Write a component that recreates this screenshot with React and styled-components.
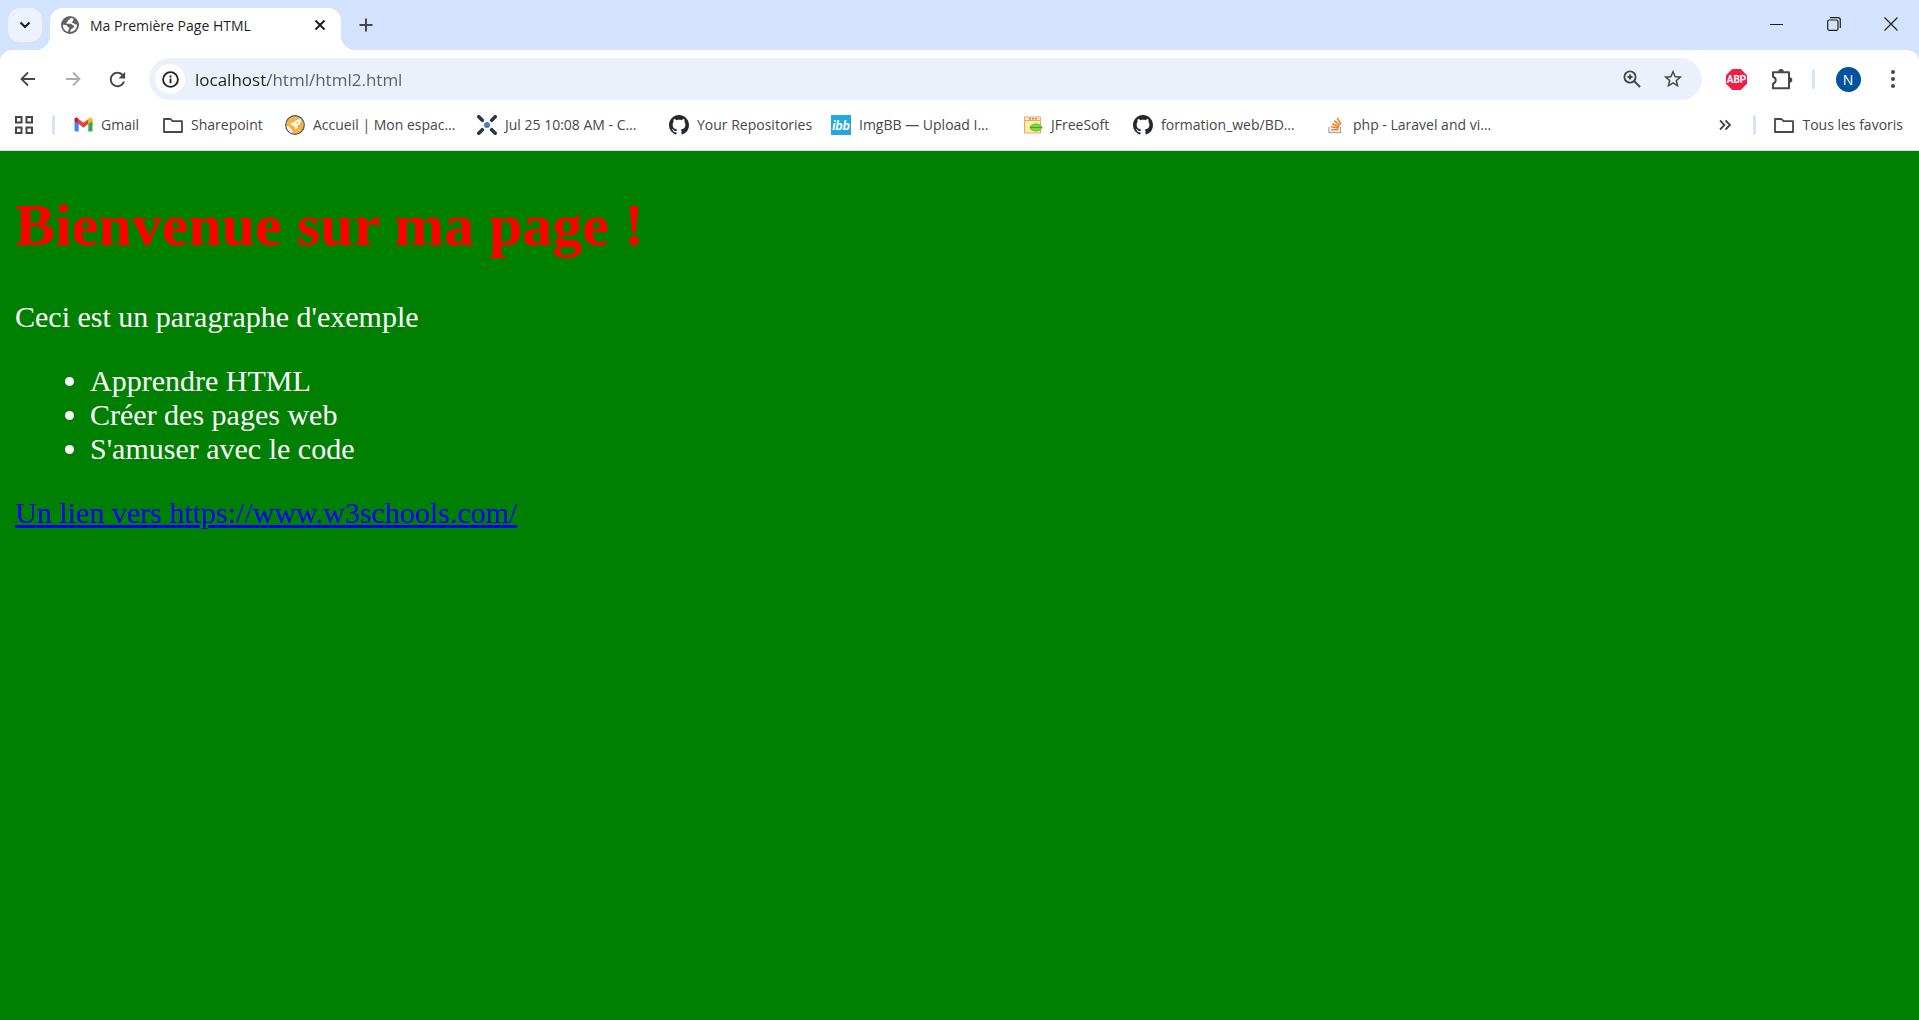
import React, { useState } from "react";
import styled, { createGlobalStyle } from "styled-components";

const GlobalStyle = createGlobalStyle`
  * { box-sizing: border-box; }
  body { margin: 0; background: #008000; }
  button, input { font: inherit; color: inherit; }
`;

const Window = styled.div`
  min-height: 100vh;
  display: flex;
  flex-direction: column;
  background: #d3e3fd;
  font-family: "Open Sans", "Noto Sans", sans-serif;
  font-size: 14px;
  color: #474747;
`;

const TabStrip = styled.header`
  display: flex;
  align-items: flex-end;
  height: 50px;
  padding-left: 8px;
`;

const IconButton = styled.button`
  display: inline-flex;
  align-items: center;
  justify-content: center;
  flex: none;
  width: ${(p) => p.$width || 34}px;
  height: 34px;
  padding: 0;
  border: 0;
  border-radius: 12px;
  background: ${(p) => p.$fill || "transparent"};
  color: ${(p) => p.$color || "#474747"};
`;

const TabSearch = styled(IconButton)`
  margin: 0 8px 8px 0;
`;

const Tab = styled.div`
  position: relative;
  display: flex;
  align-items: center;
  width: 291px;
  height: 42px;
  padding: 0 4px 8px 11px;
  border-radius: 13px 13px 0 0;
  background: #fff;
  color: #1f1f1f;

  &::before,
  &::after {
    content: "";
    position: absolute;
    bottom: 0;
    width: 14px;
    height: 14px;
  }
  &::before {
    left: -14px;
    background: radial-gradient(circle at 0 0, transparent 14px, #fff 14px);
  }
  &::after {
    right: -14px;
    background: radial-gradient(circle at 100% 0, transparent 14px, #fff 14px);
  }
`;

const TabTitle = styled.span`
  flex: 1;
  margin-left: 11px;
  white-space: nowrap;
`;

const NewTab = styled(IconButton)`
  margin: 0 0 8px 8px;
`;

const WindowControls = styled.div`
  display: flex;
  align-self: flex-start;
  margin-left: auto;
`;

const WindowButton = styled(IconButton)`
  width: 57px;
  height: 48px;
  border-radius: 0;
  color: #1f1f1f;
`;

const Toolbar = styled.div`
  display: flex;
  align-items: center;
  height: 58px;
  padding: 0 9px 0 5px;
  border-radius: 12px 12px 0 0;
  background: #fff;
`;

const NavButtons = styled.nav`
  display: flex;
  margin-right: 9px;
`;

const AddressBar = styled.form`
  display: flex;
  align-items: center;
  flex: 1;
  height: 42px;
  padding: 0 9px 0 6px;
  border-radius: 21px;
  background: #ecf0fa;
`;

const SiteInfo = styled(IconButton)`
  width: 30px;
  height: 30px;
  border-radius: 50%;
`;

const Address = styled.input`
  flex: 1;
  min-width: 0;
  height: 30px;
  padding: 0 0 0 10px;
  border: 0;
  outline: 0;
  font-size: 17px;
  color: transparent;
  caret-color: #1f1f1f;
  background: linear-gradient(90deg, #1f1f1f 83px, #5b5d60 83px);
  background-clip: text;
  -webkit-background-clip: text;
`;

const Divider = styled.span`
  flex: none;
  width: 3px;
  height: 20px;
  border-radius: 2px;
  background: #d3e3fd;
`;

const Actions = styled.div`
  display: flex;
  align-items: center;
  margin-left: 12px;
`;

const ToolbarDivider = styled(Divider)`
  margin: 0 5px 0 8px;
`;

const Avatar = styled.span`
  display: flex;
  align-items: center;
  justify-content: center;
  width: 25px;
  height: 25px;
  border-radius: 50%;
  background: #00539c;
  color: #fff;
  font-size: 14px;
`;

const BookmarksBar = styled.nav`
  display: flex;
  align-items: center;
  height: 43px;
  padding: 0 16px 9px 7px;
  background: #fff;
  border-bottom: 1px solid #dadce0;
`;

const BookmarkDivider = styled(Divider)`
  margin: 0 18px 0 11px;
`;

const Bookmark = styled.a`
  display: flex;
  align-items: center;
  gap: 8px;
  flex: none;
  width: ${(p) => (p.$width ? `${p.$width}px` : "auto")};
  color: #474747;
  text-decoration: none;
  white-space: nowrap;
`;

const BookmarkIcon = styled.span`
  display: flex;
  align-items: center;
  justify-content: center;
  flex: none;
  width: 20px;
  height: 20px;
`;

const Overflow = styled.div`
  display: flex;
  align-items: center;
  margin-left: auto;
`;

const Page = styled.main`
  flex: 1;
  padding: 40px 15px;
  background: #008000;
  color: #fff;
  font: 30px/34px "Liberation Serif", "Times New Roman", serif;
`;

const Heading = styled.h1`
  margin: 0 0 40px;
  font-size: 60px;
  line-height: 69px;
  color: #f00;
`;

const Paragraph = styled.p`
  margin: 0 0 30px;
`;

const List = styled.ul`
  margin: 0 0 30px;
  padding-left: 75px;
`;

const Link = styled.a`
  color: #00e;
`;

const Svg = ({ size = 20, box = 20, children, ...rest }) => (
  <svg width={size} height={size} viewBox={`0 0 ${box} ${box}`} fill="none" aria-hidden="true" {...rest}>
    {children}
  </svg>
);

const Chevron = () => (
  <Svg size={12} box={12}><path d="M1.500 3.500L6 8l4.500-4.500" stroke="currentColor" strokeWidth="2.200" /></Svg>
);
const Globe = () => (
  <Svg size={18} box={18}>
    <circle cx="9" cy="9" r="9" fill="#5f6368" />
    <path d="M10.600 2C9 2.200 8.700 3.400 7.600 4c-1 .6-.9 1.700-1.700 2.200-.8.400-.7 1.500.3 1.500h3.600c1.200.1 1 1.600 2.200 1.600 1.500.1 1.600 1.700.5 2.300-1 .5-1.200 1.300-2.200 1.700-1 .5-1 1.700-.8 2.800A7.200 7.200 0 0 0 16 8.200c-1 .6-2.300.3-2.900-.5-.6-.8-1.900-.5-1.900-1.700 0-1 1-1.300 1.300-2.300.1-.8-.8-1.500-1.900-1.700z" fill="#fff" />
    <path d="M1.800 8.700c1.200.1 3 .1 4 .7.900.5.600 1.500 1.400 1.900 1.200.5 1.600 1.200.7 2-.7.700-.7 1.500-.6 2.600A7.200 7.200 0 0 1 1.800 8.700z" fill="#fff" />
  </Svg>
);
const Cross = () => (
  <Svg size={12} box={12}><path d="M1.500 1.500l9 9M10.500 1.500l-9 9" stroke="currentColor" strokeWidth="1.900" /></Svg>
);
const Plus = () => (
  <Svg size={14} box={14}><path d="M7 .500v13M.5 7h13" stroke="currentColor" strokeWidth="2" /></Svg>
);
const Arrow = ({ flip }) => (
  <Svg size={16} box={16}>
    <path d={flip ? "M1 8h13M8 1.500L14.500 8 8 14.500" : "M15 8H2M8 1.500L1.500 8 8 14.500"} stroke="currentColor" strokeWidth="1.800" />
  </Svg>
);
const Reload = () => (
  <Svg size={23} box={24}>
    <path d="M17.650 6.350C16.200 4.900 14.210 4 12 4c-4.420 0-7.990 3.580-7.990 8s3.570 8 7.990 8c3.730 0 6.840-2.550 7.730-6h-2.080c-.82 2.330-3.040 4-5.650 4-3.310 0-6-2.690-6-6s2.690-6 6-6c1.660 0 3.140.690 4.220 1.780L13 11h7V4l-2.350 2.350z" fill="currentColor" />
  </Svg>
);
const Info = () => (
  <Svg size={17} box={17}>
    <circle cx="8.500" cy="8.500" r="7.400" stroke="#1f1f1f" strokeWidth="1.800" />
    <path d="M8.500 7.600v4.700M8.500 4.500v1.900" stroke="#1f1f1f" strokeWidth="1.800" />
  </Svg>
);
const ZoomIcon = () => (
  <Svg size={18} box={18}>
    <circle cx="7" cy="7" r="5.600" stroke="currentColor" strokeWidth="1.900" />
    <path d="M11 11l6 6M7 4.500v5M4.500 7h5" stroke="currentColor" strokeWidth="1.900" />
  </Svg>
);
const Star = () => (
  <Svg size={22} box={24}>
    <path d="M22 9.240l-7.190-.62L12 2 9.190 8.630 2 9.240l5.460 4.730L5.820 21 12 17.270 18.180 21l-1.630-7.030L22 9.240zM12 15.400l-3.760 2.270 1-4.280-3.320-2.880 4.380-.38L12 6.100l1.710 4.040 4.380.38-3.320 2.880 1 4.280L12 15.400z" fill="currentColor" />
  </Svg>
);
const AdBlock = () => (
  <Svg size={21} box={21}>
    <path d="M6.200 0h8.600L21 6.200v8.600L14.800 21H6.200L0 14.800V6.200z" fill="#f21d45" />
    <text x="10.500" y="14" textAnchor="middle" fontFamily="Roboto, sans-serif" fontWeight="700" fontSize="10" fill="#fff">ABP</text>
  </Svg>
);
const Puzzle = () => (
  <Svg size={22} box={22}>
    <path d="M2 4.200h16v16H2v-4.600c3.600-1 3.600-5.800 0-6.800z" stroke="currentColor" strokeWidth="2" strokeLinejoin="round" />
    <path d="M7.200 3.800a2.800 2.800 0 0 1 5.600 0zM18.500 9.200a2.800 2.800 0 0 1 0 5.600z" fill="currentColor" />
  </Svg>
);
const Dots = () => (
  <Svg size={18} box={18}>
    <circle cx="9" cy="2" r="2" fill="currentColor" /><circle cx="9" cy="9" r="2" fill="currentColor" /><circle cx="9" cy="16" r="2" fill="currentColor" />
  </Svg>
);
const Apps = () => (
  <Svg size={18} box={18}>
    <path d="M1 1h5.500v5.500H1zM11.500 1H17v5.500h-5.500zM1 11.500h5.500V17H1zM11.500 11.500H17V17h-5.500z" stroke="currentColor" strokeWidth="2" />
  </Svg>
);
const Gmail = () => (
  <Svg size={19} box={19}>
    <path d="M.5 5.500L4.700 8.600V16.500H1.800A1.300 1.300 0 0 1 .5 15.200z" fill="#4285f4" />
    <path d="M18.500 5.500l-4.200 3.100v7.900h2.900a1.300 1.300 0 0 0 1.300-1.300z" fill="#34a853" />
    <path d="M14.300 4.200v4.900l4.200-3.200V4.500c0-1.700-1.900-2.500-3.200-1.500z" fill="#fbbc04" />
    <path d="M4.700 9.100V4.200l4.800 3.600 4.800-3.600v4.900l-4.800 3.600z" fill="#ea4335" />
    <path d="M.5 4.500v1.400l4.200 3.200V4.200L3.700 3C2.400 2 .5 2.800.5 4.500z" fill="#c5221f" />
  </Svg>
);
const Folder = () => (
  <Svg><path d="M1 4h6.500l2 2.200H19V17H1z" stroke="currentColor" strokeWidth="1.800" strokeLinejoin="round" /></Svg>
);
const Rocket = () => (
  <Svg>
    <circle cx="10" cy="10" r="9.300" fill="#fbb03f" stroke="#31607f" strokeWidth="1.200" />
    <path d="M16 4c-3 0-5.300 1-6.800 3.200L7 7.500 5.200 9.800l2.400.2 2.300 2.300.3 2.500 2.200-1.800.2-2.400C14.900 9.200 16 7 16 4z" fill="#fff" />
    <circle cx="12.300" cy="7.700" r="1" fill="#fbb03f" />
    <path d="M1.600 11c2-.4 2.800.6 2.700 1.700 1.500.1 2.100 1 1.800 2.100 1.100.3 1.500 1.500 1.200 3.200C4.500 17.400 2 15 1.600 11z" fill="#fff" />
  </Svg>
);
const CrossDots = () => (
  <Svg>
    <path d="M1.800 1.800l3.500 3.500M18.200 1.800l-3.500 3.500M1.800 18.200l3.500-3.500M18.200 18.200l-3.500-3.500" stroke="#2f353c" strokeWidth="3.600" strokeLinecap="round" />
    <circle cx="10" cy="10" r="3" fill="#4c7bc5" />
  </Svg>
);
const GitHub = () => (
  <Svg box={16}>
    <path fill="#24292f" d="M8 0C3.580 0 0 3.580 0 8c0 3.540 2.290 6.530 5.470 7.590.4.070.55-.17.55-.38 0-.19-.01-.82-.01-1.490-2.010.370-2.530-.490-2.690-.940-.09-.23-.48-.94-.82-1.130-.28-.15-.68-.52-.01-.53.63-.01 1.080.58 1.230.82.72 1.210 1.870.870 2.330.660.07-.52.28-.87.51-1.070-1.780-.2-3.640-.890-3.640-3.950 0-.870.310-1.590.820-2.150-.08-.2-.36-1.020.080-2.120 0 0 .670-.210 2.200.820.640-.180 1.320-.270 2-.270s1.360.090 2 .270c1.530-1.040 2.200-.820 2.200-.820.440 1.100.160 1.920.080 2.120.510.560.820 1.270.820 2.150 0 3.070-1.870 3.750-3.650 3.950.290.250.540.730.540 1.480 0 1.070-.010 1.930-.010 2.200 0 .210.150.460.550.380A8.010 8.010 0 0 0 16 8c0-4.420-3.580-8-8-8z" />
  </Svg>
);
const ImgBB = () => (
  <Svg>
    <path d="M0 0h20v20H0z" fill="#23a8e0" />
    <text x="10" y="15" textAnchor="middle" fontFamily="Roboto, sans-serif" fontSize="13" fontWeight="700" fontStyle="italic" fill="#fff">ibb</text>
  </Svg>
);
const JFree = () => (
  <Svg>
    <path d="M1.500 2h16v16h-16z" fill="#fff19a" stroke="#f99a85" />
    <path d="M2 5.500h15" stroke="#f99a85" />
    <path d="M6 3.800h2M9 3.800h2" stroke="#5b9bd0" strokeWidth="1.400" /><path d="M12 3.800h2" stroke="#ef7d3c" strokeWidth="1.400" />
    <ellipse cx="13" cy="12.500" rx="6" ry="3.500" fill="#63e53a" stroke="#a5a03c" /><path d="M7 12.500h12" stroke="#4a9a2e" />
  </Svg>
);
const StackOverflow = () => (
  <Svg>
    <path d="M4 12v5.500h11.500V12" stroke="#a8adb2" strokeWidth="1.400" />
    <path d="M6 14.800h7.600M6.200 11.800l7.400 1.300M7.200 8.800l6.800 2.900M9.200 5.600l5.600 4.800M12.200 3l3.900 6.300" stroke="#f48024" strokeWidth="1.600" />
  </Svg>
);
const DoubleChevron = () => (
  <Svg size={12} box={12}><path d="M1 1.500L5.500 6 1 10.500M6.500 1.500L11 6l-4.500 4.500" stroke="currentColor" strokeWidth="1.800" /></Svg>
);

const bookmarks = [
  { label: "Gmail", icon: Gmail, width: 90 },
  { label: "Sharepoint", icon: Folder, width: 122 },
  { label: "Accueil | Mon espac…", icon: Rocket, width: 192 },
  { label: "Jul 25 10:08 AM - C…", icon: CrossDots, width: 192 },
  { label: "Your Repositories", icon: GitHub, width: 162 },
  { label: "ImgBB — Upload I…", icon: ImgBB, width: 192 },
  { label: "JFreeSoft", icon: JFree, width: 110 },
  { label: "formation_web/BD…", icon: GitHub, width: 192 },
  { label: "php - Laravel and vi…", icon: StackOverflow, width: 192 },
];

export default function App() {
  const [url, setUrl] = useState("localhost/html/html2.html");
  return (
    <Window>
      <GlobalStyle />
      <TabStrip>
        <TabSearch aria-label="Rechercher dans les onglets" $fill="#ecf2fe" $color="#1f1f1f"><Chevron /></TabSearch>
        <Tab>
          <Globe />
          <TabTitle>Ma Première Page HTML</TabTitle>
          <IconButton aria-label="Fermer l'onglet" $color="#1f1f1f"><Cross /></IconButton>
        </Tab>
        <NewTab aria-label="Nouvel onglet"><Plus /></NewTab>
        <WindowControls>
          <WindowButton aria-label="Réduire"><Svg size={13} box={13}><path d="M0 6.500h13" stroke="currentColor" /></Svg></WindowButton>
          <WindowButton aria-label="Restaurer">
            <Svg size={14} box={14}>
              <rect x=".7" y="3" width="10.300" height="10.300" rx="1.500" stroke="currentColor" strokeWidth="1.200" />
              <path d="M3 .7h8a2.300 2.300 0 0 1 2.300 2.300v8" stroke="currentColor" strokeWidth="1.200" />
            </Svg>
          </WindowButton>
          <WindowButton aria-label="Fermer"><Svg size={14} box={14}><path d="M.5.500l13 13M13.500.500l-13 13" stroke="currentColor" strokeWidth="1.200" /></Svg></WindowButton>
        </WindowControls>
      </TabStrip>

      <Toolbar>
        <NavButtons aria-label="Navigation">
          <IconButton $width={45} aria-label="Retour"><Arrow /></IconButton>
          <IconButton $width={45} $color="#acacac" aria-label="Avancer"><Arrow flip /></IconButton>
          <IconButton $width={45} aria-label="Actualiser"><Reload /></IconButton>
        </NavButtons>
        <AddressBar onSubmit={(e) => e.preventDefault()}>
          <SiteInfo type="button" $fill="#fff" aria-label="Informations sur le site"><Info /></SiteInfo>
          <Address aria-label="Adresse" value={url} onChange={(e) => setUrl(e.target.value)} />
          <IconButton type="button" $width={41} aria-label="Zoom"><ZoomIcon /></IconButton>
          <IconButton type="button" $width={41} aria-label="Ajouter aux favoris"><Star /></IconButton>
        </AddressBar>
        <Actions>
          <IconButton $width={45} aria-label="Adblock Plus"><AdBlock /></IconButton>
          <IconButton $width={45} aria-label="Extensions"><Puzzle /></IconButton>
          <ToolbarDivider />
          <IconButton $width={56} aria-label="Profil"><Avatar>N</Avatar></IconButton>
          <IconButton aria-label="Menu"><Dots /></IconButton>
        </Actions>
      </Toolbar>

      <BookmarksBar aria-label="Favoris">
        <IconButton aria-label="Applications"><Apps /></IconButton>
        <BookmarkDivider />
        {bookmarks.map(({ label, icon: Icon, width }) => (
          <Bookmark key={label} href="#" $width={width}>
            <BookmarkIcon><Icon /></BookmarkIcon>
            {label}
          </Bookmark>
        ))}
        <Overflow>
          <IconButton aria-label="Autres favoris"><DoubleChevron /></IconButton>
          <BookmarkDivider />
          <Bookmark href="#"><BookmarkIcon><Folder /></BookmarkIcon>Tous les favoris</Bookmark>
        </Overflow>
      </BookmarksBar>

      <Page>
        <Heading>Bienvenue sur ma page !</Heading>
        <Paragraph>Ceci est un paragraphe d'exemple</Paragraph>
        <List>
          <li>Apprendre HTML</li>
          <li>Créer des pages web</li>
          <li>S'amuser avec le code</li>
        </List>
        <Link href="https://www.w3schools.com/">Un lien vers https://www.w3schools.com/</Link>
      </Page>
    </Window>
  );
}
